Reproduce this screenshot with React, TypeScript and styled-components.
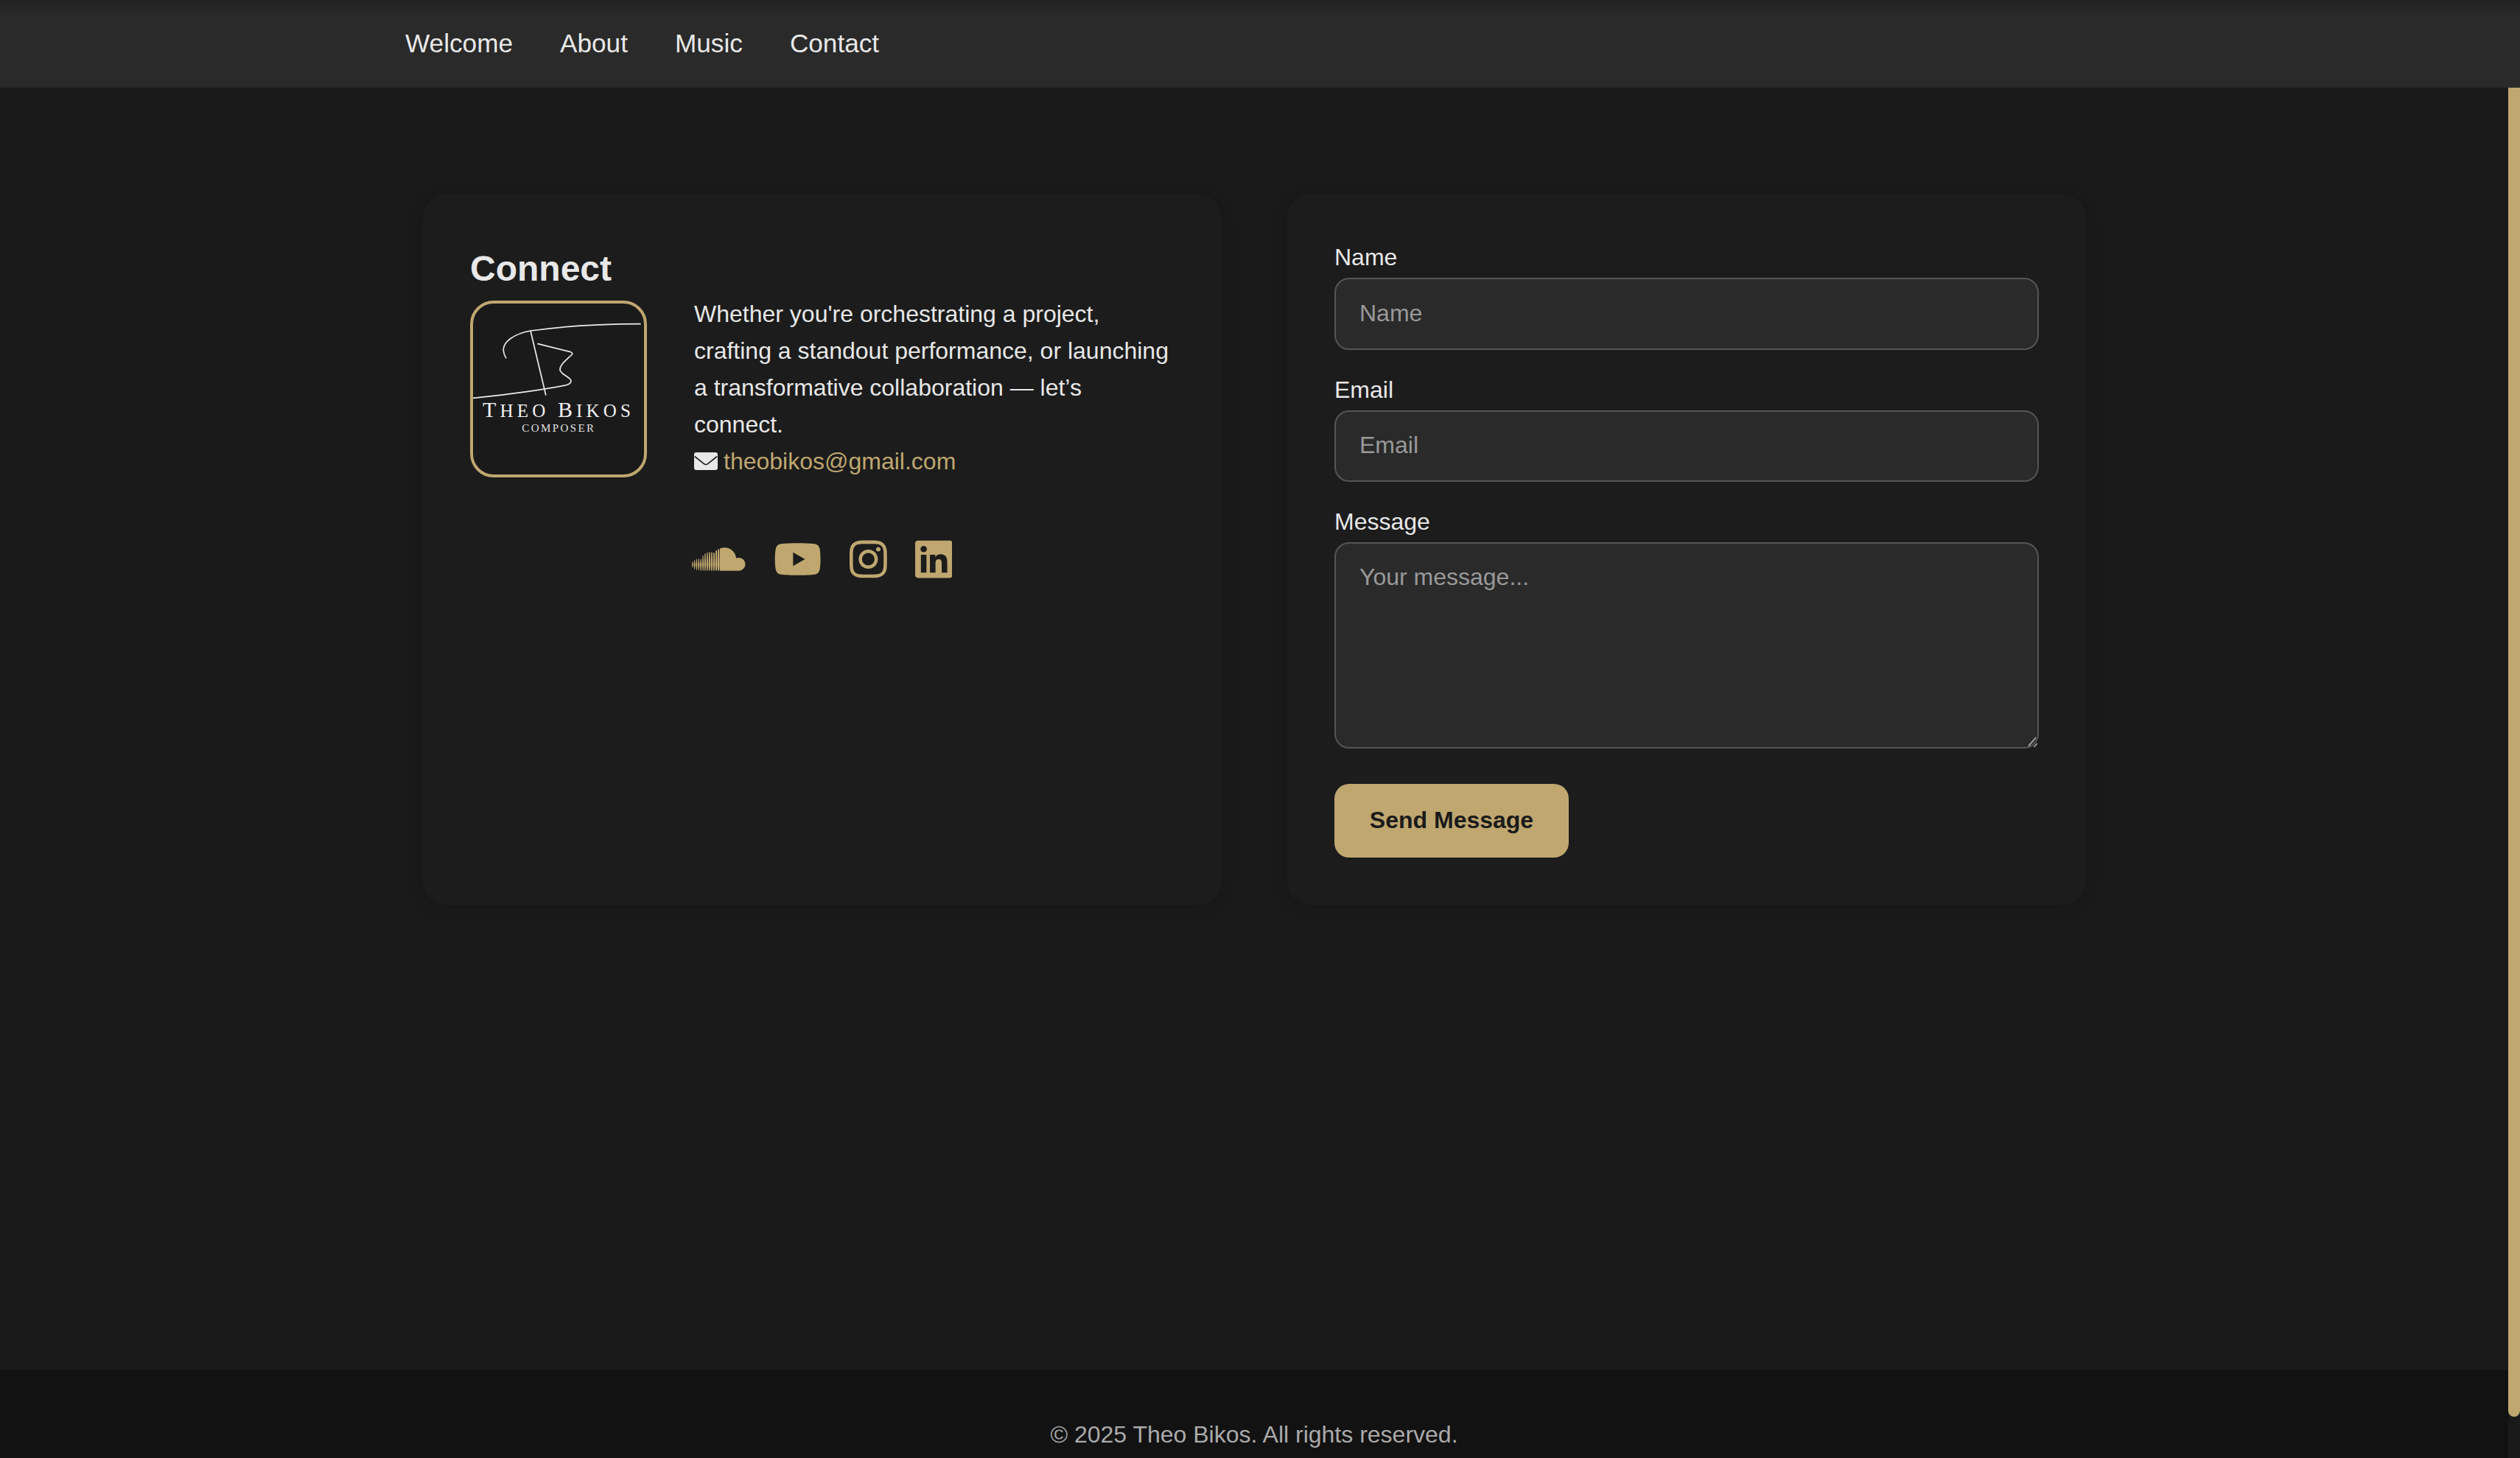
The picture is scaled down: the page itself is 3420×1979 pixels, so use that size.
import React from "react";
import styled, { createGlobalStyle } from "styled-components";
import { FaSoundcloud, FaYoutube, FaInstagram, FaLinkedin } from "react-icons/fa";

const gold = "#bfa76f";

const Global = createGlobalStyle`
  html, body { margin: 0; padding: 0; height: 100%; overflow: hidden; background: #1a1a1a; }
  body { font-family: "Liberation Sans", Arial, sans-serif; font-size: 32px; color: #e8e8e8; }
  * { box-sizing: border-box; }
`;

const Shell = styled.div`
  height: 100vh;
  display: flex;
  background: #1a1a1a;
`;

const Viewport = styled.div`
  flex: 1;
  min-width: 0;
  overflow: hidden;
`;

const ScrollTrack = styled.div`
  flex: none;
  width: 16px;
  background: #1a1a1a;
`;

const ScrollThumb = styled.div`
  height: 1923px;
  background: ${gold};
  border-radius: 8px;
`;

const Page = styled.div`
  min-height: 2036px;
  display: flex;
  flex-direction: column;
`;

const NavBar = styled.nav`
  position: fixed;
  top: 0;
  left: 0;
  width: 100vw;
  height: 119px;
  z-index: 10;
  display: flex;
  align-items: center;
  gap: 64px;
  padding: 0 0 2px 550px;
  background: linear-gradient(#232323 0, #2a2a2a 24px);
`;

const NavLink = styled.a`
  font-size: 35.2px;
  color: #e8e8e8;
  text-decoration: none;
`;

const Main = styled.main`
  flex: 1;
  padding: 263px 0 0 1px;
  display: flex;
  justify-content: center;
  align-items: flex-start;
  gap: 89px;
`;

const Card = styled.section`
  width: 1084px;
  height: 965px;
  padding: 64px;
  background: #1c1c1c;
  border-radius: 32px;
  box-shadow: 0 4px 24px rgba(0, 0, 0, 0.16);
`;

const Heading = styled.h2`
  margin: 10px 0 0;
  font-size: 48px;
  line-height: 55px;
  font-weight: 700;
  color: #e8e8e8;
`;

const Intro = styled.div`
  display: flex;
  align-items: flex-start;
  gap: 64px;
  margin-top: 9px;
`;

const LogoFrame = styled.div`
  flex: none;
  width: 240px;
  height: 240px;
  margin-top: 7px;
  border: 4px solid ${gold};
  border-radius: 32px;
  background: #1a1a1a;
  overflow: hidden;
`;

const LogoSvg = styled.svg`
  display: block;
  width: 232px;
  height: 232px;
  overflow: visible;
`;

const Copy = styled.div`
  flex: 1;
  line-height: 50px;
`;

const Blurb = styled.p`
  margin: 0;
`;

const EmailRow = styled.div`
  display: flex;
  align-items: center;
  gap: 8px;
`;

const EmailLink = styled.a`
  color: ${gold};
  text-decoration: none;
`;

const Socials = styled.div`
  display: flex;
  align-items: center;
  gap: 38px;
  margin: 79px 0 0 -3px;
  color: ${gold};
`;

const SoundcloudIcon = styled(FaSoundcloud)`
  display: block;
  flex: none;
  width: 72.5px;
  height: 58px;
`;

const YoutubeIcon = styled(FaYoutube)`
  display: block;
  flex: none;
  width: 65.25px;
  height: 58px;
`;

const InstagramIcon = styled(FaInstagram)`
  display: block;
  flex: none;
  width: 50.75px;
  height: 58px;
`;

const LinkedinIcon = styled(FaLinkedin)`
  display: block;
  flex: none;
  width: 50.75px;
  height: 58px;
`;

const Field = styled.div`
  margin-bottom: 36px;
`;

const FormStack = styled.form`
  margin-top: 4px;
`;

const Label = styled.label`
  display: block;
  line-height: 37px;
  margin-bottom: 9px;
  color: #e8e8e8;
`;

const Input = styled.input`
  display: block;
  width: 100%;
  height: 97.6px;
  padding: 0 32px 1px;
  background: #2a2a2a;
  border: 2px solid #555;
  border-radius: 20px;
  color: #e8e8e8;
  font: inherit;
  &::placeholder { color: #999; opacity: 1; }
`;

const TextAreaWrap = styled.div`
  position: relative;
`;

const TextArea = styled.textarea`
  display: block;
  width: 100%;
  height: 280px;
  padding: 27px 32px;
  background: #2a2a2a;
  border: 2px solid #555;
  border-radius: 20px;
  color: #e8e8e8;
  font: inherit;
  line-height: 37px;
  resize: none;
  &::placeholder { color: #999; opacity: 1; }
`;

const Grip = styled.svg`
  position: absolute;
  right: 0;
  bottom: 0;
  width: 20px;
  height: 20px;
`;

const Send = styled.button`
  display: block;
  width: 318px;
  height: 100px;
  margin-top: 48px;
  padding: 0 0 2px;
  border: 0;
  border-radius: 20px;
  background: ${gold};
  color: #1a1a1a;
  font: 700 32px "Liberation Sans", Arial, sans-serif;
`;

const Footer = styled.footer`
  height: 177px;
  display: flex;
  align-items: center;
  justify-content: center;
  background: #121212;
  color: #aaa;
`;

const Logo = () => (
  <LogoSvg viewBox="0 0 232 232" aria-label="Theo Bikos Composer">
    <g fill="none" stroke="#ececec" strokeLinecap="round" strokeLinejoin="round" transform="translate(-4 -4)">
      <path strokeWidth="1.7" d="M231 31.7 C190 31.8 132 34 82 41 C60 45 44 56 45.3 68 C45.6 72 47 75 48.7 77.7" />
      <path strokeWidth="1.7" d="M82 41 L102.7 128" />
      <path strokeWidth="1.7" d="M92 58.7 L135.3 69.3 C139 70.5 139.5 72 137.5 74 C130 81 122 87 122 93.7 C122 100 137 104 137 109 C137 112 134 113.8 130 114.8 C110 119 60 127 4 132.3" />
    </g>
    <text x="13" y="153.7" fill="#f2f2f2" fontFamily="'Liberation Serif', serif" fontSize="25" textLength="201" lengthAdjust="spacing">
      <tspan fontSize="30">T</tspan>HEO <tspan fontSize="30">B</tspan>IKOS
    </text>
    <text x="66.3" y="173.7" fill="#e0e0e0" fontFamily="'Liberation Serif', serif" fontSize="15" textLength="97.7" lengthAdjust="spacing">COMPOSER</text>
  </LogoSvg>
);

const Envelope = () => (
  <svg width="32" height="24" viewBox="0 0 32 24" aria-hidden="true">
    <rect width="32" height="24" rx="3" fill="#e8e8e8" />
    <path d="M0.8 5.5 L13.5 15.6 Q16 17.4 18.5 15.6 L31.2 5.5" fill="none" stroke="#1c1c1c" strokeWidth="1.6" />
  </svg>
);

export default function App() {
  return (
    <>
      <Global />
      <NavBar>
        <NavLink href="#">Welcome</NavLink>
        <NavLink href="#">About</NavLink>
        <NavLink href="#">Music</NavLink>
        <NavLink href="#">Contact</NavLink>
      </NavBar>
      <Shell>
        <Viewport>
          <Page>
            <Main>
              <Card>
                <Heading>Connect</Heading>
                <Intro>
                  <LogoFrame><Logo /></LogoFrame>
                  <Copy>
                    <Blurb>Whether you're orchestrating a project, crafting a standout performance, or launching a transformative collaboration — let’s connect.</Blurb>
                    <EmailRow>
                      <Envelope />
                      <EmailLink href="#">theobikos@gmail.com</EmailLink>
                    </EmailRow>
                    <Socials>
                      <SoundcloudIcon />
                      <YoutubeIcon />
                      <InstagramIcon />
                      <LinkedinIcon />
                    </Socials>
                  </Copy>
                </Intro>
              </Card>
              <Card>
                <FormStack>
                  <Field>
                    <Label>Name</Label>
                    <Input placeholder="Name" />
                  </Field>
                  <Field>
                    <Label>Email</Label>
                    <Input placeholder="Email" />
                  </Field>
                  <Field>
                    <Label>Message</Label>
                    <TextAreaWrap>
                      <TextArea placeholder="Your message..." />
                      <Grip viewBox="0 0 20 20" aria-hidden="true">
                        <path d="M16 5 L6 16.7 M17.7 13 L13.3 18" stroke="#aaa" strokeWidth="1.8" fill="none" />
                      </Grip>
                    </TextAreaWrap>
                  </Field>
                  <Send type="button">Send Message</Send>
                </FormStack>
              </Card>
            </Main>
            <Footer>© 2025 Theo Bikos. All rights reserved.</Footer>
          </Page>
        </Viewport>
        <ScrollTrack><ScrollThumb /></ScrollTrack>
      </Shell>
    </>
  );
}
